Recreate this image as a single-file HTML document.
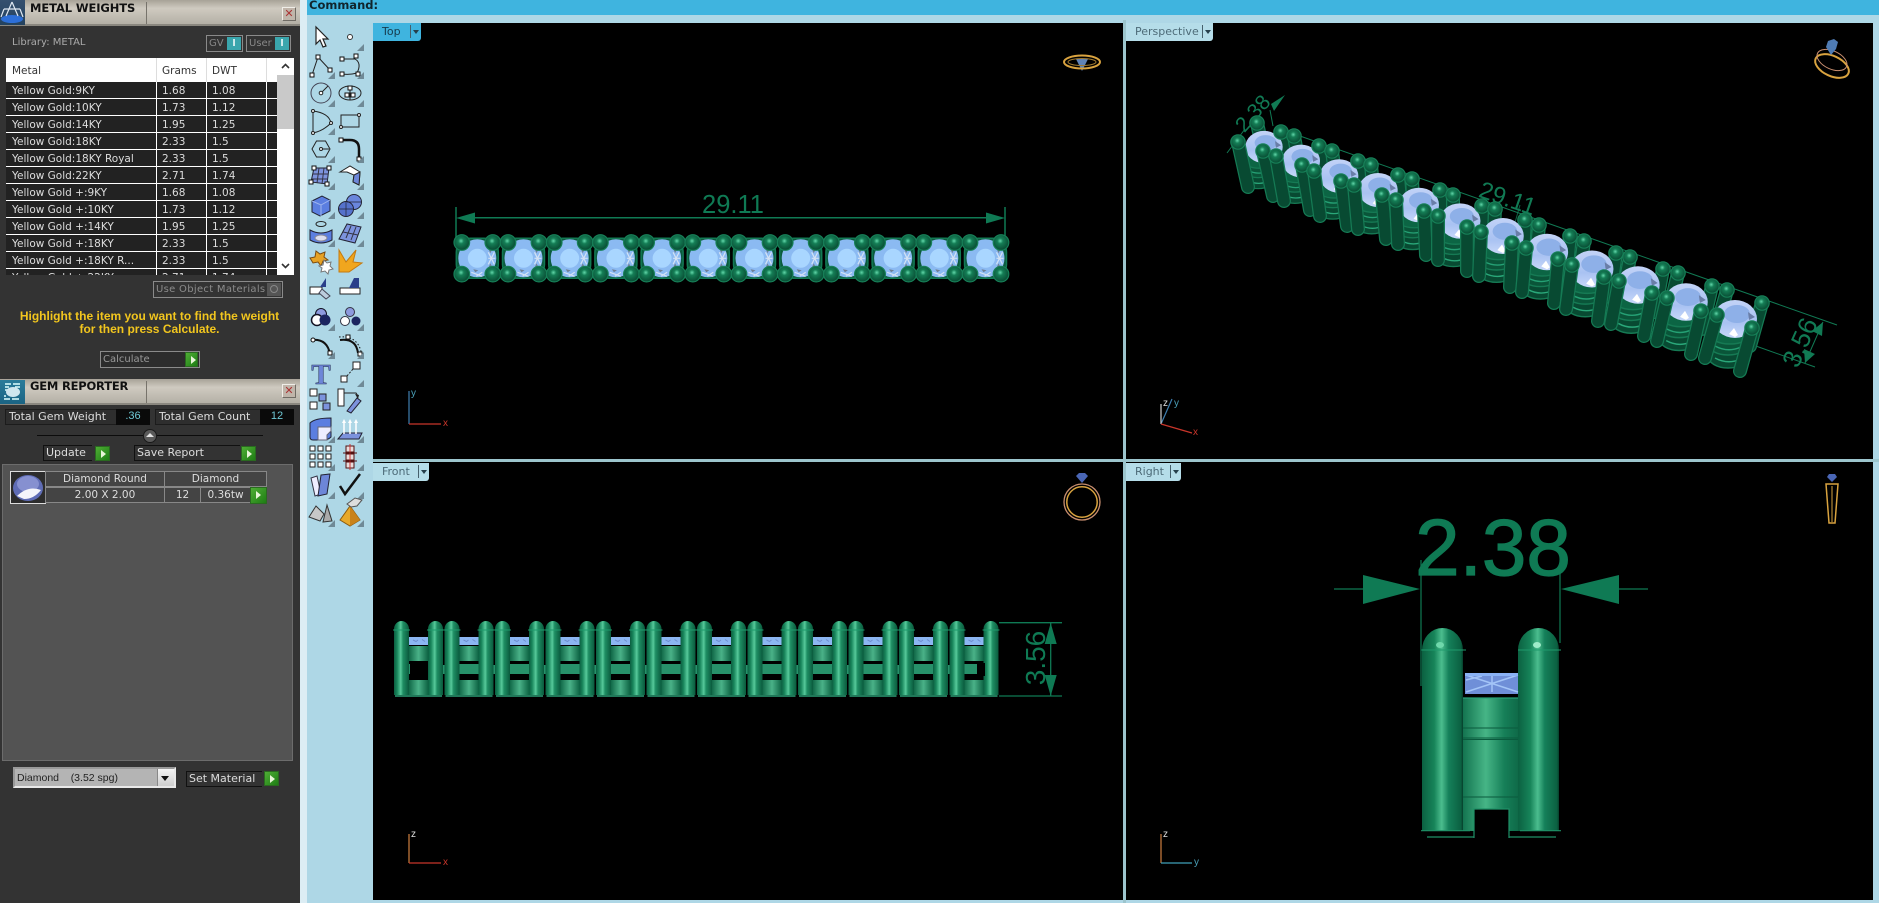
<!DOCTYPE html>
<html><head><meta charset="utf-8"><title>Metal Weights</title>
<style>
html,body{margin:0;padding:0;background:#333;width:1879px;height:903px;overflow:hidden}
*{box-sizing:border-box}
body{font-family:"DejaVu Sans","Liberation Sans",sans-serif;position:relative}
.a{position:absolute}
.t{white-space:nowrap;line-height:1}
.vp{position:absolute;background:#000}
.tab{position:absolute;height:18px;background:#b5dde9;color:#4d6b78;font:11px/18px "DejaVu Sans",sans-serif;padding-left:9px;border-bottom-right-radius:3px}
.tab i{position:absolute;right:0;top:2px;width:11px;height:13px;border-left:1px solid #46606c}
.tab i:after{content:"";position:absolute;left:2px;top:5px;border:3.5px solid transparent;border-top:4px solid #26404c;border-bottom:0}
.bar{position:absolute;left:0;width:300px;height:26px;background:linear-gradient(#a7a297,#cfcac0 35%,#b4b0a6);border-bottom:2px solid #8a877f}
.sep{position:absolute;left:146px;top:2px;width:1px;height:22px;background:#77736b}
.x{position:absolute;left:282px;width:14px;height:14px;background:#c0b5aa;border:1px solid #f0eee8;border-right-color:#6f6b64;border-bottom-color:#6f6b64;color:#a33;font:11px/12px "Liberation Sans",sans-serif;text-align:center}
.hd{position:absolute;left:30px;font:bold 11.5px/1 "DejaVu Sans",sans-serif;color:#111;white-space:nowrap;letter-spacing:-.1px}
.tbl{position:absolute;left:6px;top:58px;width:288px;height:217px;overflow:hidden;background:#fff}
.h{position:absolute;left:0;top:0;width:271px;height:24px;background:#fff;color:#333;font:10.5px/24px "DejaVu Sans",sans-serif}
.h span,.r span{position:absolute;top:1px;white-space:nowrap}
.r{position:absolute;left:0;width:271px;height:16px;background:#222;color:#ddd;font:10.5px/16px "DejaVu Sans",sans-serif}
.c1{left:6px}.c2{left:156px}.c3{left:206px}
.v{position:absolute;top:24px;width:1px;height:193px;background:#fff}
.box{position:absolute;border:1px solid #8a8a8a;color:#999;font:10px/15px "DejaVu Sans",sans-serif;white-space:nowrap}
.g{position:absolute;width:15px;height:15px;background:linear-gradient(135deg,#4fae35,#1e7d14);border:1px solid #2a6a20}
.g:after{content:"";position:absolute;left:5px;top:2.5px;border:4px solid transparent;border-left:5px solid #e8f5d8;border-right:0}
.btn{position:absolute;height:16px;background:#333;border-left:1px solid #111;border-top:1px solid #111;border-bottom:1px solid #111;color:#ddd;font:11px/14px "DejaVu Sans",sans-serif;padding-left:2px;white-space:nowrap}
.cell{position:absolute;height:16px;border:1px solid #888;background:#444;color:#ddd;font:10.5px/14px "DejaVu Sans",sans-serif;text-align:center;white-space:nowrap}
svg text{font-family:"Liberation Sans",sans-serif}
.o{fill:none;stroke:#157a54;stroke-width:14;stroke-linecap:round}
.n{fill:none;stroke:#084a32;stroke-width:11.5;stroke-linecap:round}
</style></head><body>

<!-- right side backgrounds -->
<div class="a" style="left:300px;top:0;width:7px;height:903px;background:#dcedf4"></div>
<div class="a" style="left:307px;top:0;width:1572px;height:903px;background:#aed7e6"></div>
<div class="a" style="left:307px;top:0;width:1572px;height:15px;background:#3fb4df;color:#10242c;font:bold 11.5px/11px 'DejaVu Sans',sans-serif;padding-left:2px">Command:</div>
<div class="a" style="left:373px;top:459px;width:1506px;height:3px;background:#9cc5cd"></div>
<div class="a" style="left:1123px;top:20px;width:3px;height:883px;background:#9cc5cd"></div>
<div class="vp" style="left:373px;top:23px;width:750px;height:436px"></div>
<div class="vp" style="left:1126px;top:23px;width:747px;height:436px"></div>
<div class="vp" style="left:373px;top:462px;width:750px;height:438px"></div>
<div class="vp" style="left:1126px;top:462px;width:747px;height:438px"></div>

<!-- left panel -->
<div class="a" style="left:0;top:0;width:300px;height:903px;background:#333">
  <div class="bar" style="top:0"><div class="sep"></div></div>
  <div class="a" style="left:0;top:0;width:25px;height:25px;background:linear-gradient(#35506f,#23425f)">
    <svg width="25" height="25"><ellipse cx="12" cy="19" rx="11" ry="4" fill="#2d6fd8"/><path d="M12 2L6 16M12 2l6 14M4 9h16M4 9l-3 8M20 9l3 8" stroke="#dfe8f2" stroke-width="1.2" fill="none"/></svg>
  </div>
  <div class="hd" style="top:3px">METAL WEIGHTS</div>
  <div class="x" style="top:7px">✕</div>

  <div class="a t" style="left:12px;top:38px;color:#aaa;font-size:10px">Library: METAL</div>
  <div class="box" style="left:206px;top:35px;width:37px;height:17px;padding-left:2px;color:#888">GV<span class="a" style="right:1px;top:1px;width:14px;height:13px;background:#3aa6ad;color:#fff;text-align:center;font:bold 10px/13px 'Liberation Sans',sans-serif">I</span></div>
  <div class="box" style="left:246px;top:35px;width:45px;height:17px;padding-left:2px;color:#888">User<span class="a" style="right:1px;top:1px;width:14px;height:13px;background:#3aa6ad;color:#fff;text-align:center;font:bold 10px/13px 'Liberation Sans',sans-serif">I</span></div>

  <div class="tbl">
    <div class="h"><span class="c1">Metal</span><span class="c2" style="left:156px">Grams</span><span class="c3">DWT</span></div>
    <div class="r" style="top:24px"><span class="c1">Yellow Gold:9KY</span><span class="c2">1.68</span><span class="c3">1.08</span></div>
    <div class="r" style="top:41px"><span class="c1">Yellow Gold:10KY</span><span class="c2">1.73</span><span class="c3">1.12</span></div>
    <div class="r" style="top:58px"><span class="c1">Yellow Gold:14KY</span><span class="c2">1.95</span><span class="c3">1.25</span></div>
    <div class="r" style="top:75px"><span class="c1">Yellow Gold:18KY</span><span class="c2">2.33</span><span class="c3">1.5</span></div>
    <div class="r" style="top:92px"><span class="c1">Yellow Gold:18KY Royal</span><span class="c2">2.33</span><span class="c3">1.5</span></div>
    <div class="r" style="top:109px"><span class="c1">Yellow Gold:22KY</span><span class="c2">2.71</span><span class="c3">1.74</span></div>
    <div class="r" style="top:126px"><span class="c1">Yellow Gold +:9KY</span><span class="c2">1.68</span><span class="c3">1.08</span></div>
    <div class="r" style="top:143px"><span class="c1">Yellow Gold +:10KY</span><span class="c2">1.73</span><span class="c3">1.12</span></div>
    <div class="r" style="top:160px"><span class="c1">Yellow Gold +:14KY</span><span class="c2">1.95</span><span class="c3">1.25</span></div>
    <div class="r" style="top:177px"><span class="c1">Yellow Gold +:18KY</span><span class="c2">2.33</span><span class="c3">1.5</span></div>
    <div class="r" style="top:194px"><span class="c1">Yellow Gold +:18KY R...</span><span class="c2">2.33</span><span class="c3">1.5</span></div>
    <div class="r" style="top:211px"><span class="c1">Yellow Gold +:22KY</span><span class="c2">2.71</span><span class="c3">1.74</span></div>
    <div class="v" style="left:150px"></div><div class="v" style="left:200px"></div><div class="v" style="left:260px"></div>
    <div class="a" style="left:150px;top:0;width:1px;height:24px;background:#ddd"></div>
    <div class="a" style="left:200px;top:0;width:1px;height:24px;background:#ddd"></div>
    <div class="a" style="left:260px;top:0;width:1px;height:24px;background:#ddd"></div>
    <div class="a" style="left:271px;top:17px;width:17px;height:54px;background:#c9c9c9"></div>
    <svg class="a" style="left:271px;top:0" width="17" height="217"><path d="M5 10l3.5-3.5L12 10" fill="none" stroke="#333" stroke-width="1.6"/><path d="M5 206l3.5 3.5L12 206" fill="none" stroke="#333" stroke-width="1.6"/></svg>
  </div>

  <div class="box" style="left:153px;top:281px;width:130px;height:17px;padding-left:2px;color:#8c8c8c;letter-spacing:.3px">Use Object Materials<span class="a" style="right:1px;top:1px;width:14px;height:13px;background:#555"></span><span class="a" style="right:4px;top:3px;width:8px;height:8px;border:1px solid #888;border-radius:50%"></span></div>
  <div class="a" style="left:0;top:310px;width:299px;text-align:center;color:#f2c61e;font:bold 12px/13px 'Liberation Sans',sans-serif">Highlight the item you want to find the weight<br>for then press Calculate.</div>
  <div class="box" style="left:100px;top:351px;width:100px;height:17px;padding-left:2px;background:#2c2c2c">Calculate</div>
  <div class="g" style="left:185px;top:352px;width:13px"></div>

  <div class="bar" style="top:379px"><div class="sep"></div></div>
  <div class="a" style="left:0;top:380px;width:25px;height:24px;background:linear-gradient(#2a7c9a,#1b6484)">
    <svg width="25" height="24"><path d="M5 4h6M13 4h7M5 7h4M5 10h3M4 19h6M12 19h7M4 16h2M15 7h5" stroke="#dff" stroke-width="1.4"/><ellipse cx="13" cy="12" rx="7" ry="5" fill="#cfe6ee"/></svg>
  </div>
  <div class="hd" style="top:381px;letter-spacing:-.2px">GEM REPORTER</div>
  <div class="x" style="top:384px">✕</div>

  <div class="a" style="left:5px;top:409px;width:145px;height:16px;background:#2e2e2e;border:1px solid #1c1c1c;color:#ddd;font:11px/14px 'DejaVu Sans',sans-serif;padding-left:3px;white-space:nowrap">Total Gem Weight</div>
  <div class="a" style="left:116px;top:409px;width:34px;height:16px;background:#0a0a0a;color:#6fc9d6;font:11px/15px 'Liberation Sans',sans-serif;text-align:center">.36</div>
  <div class="a" style="left:155px;top:409px;width:139px;height:16px;background:#2e2e2e;border:1px solid #1c1c1c;color:#ddd;font:11px/14px 'DejaVu Sans',sans-serif;padding-left:3px;white-space:nowrap">Total Gem Count</div>
  <div class="a" style="left:260px;top:409px;width:34px;height:16px;background:#0a0a0a;color:#6fc9d6;font:11px/15px 'Liberation Sans',sans-serif;text-align:center">12</div>

  <div class="a" style="left:37px;top:435px;width:226px;height:1px;background:#0c0c0c"></div>
  <div class="a" style="left:143px;top:429px;width:14px;height:14px;border-radius:50%;background:#5a5a5a;border:1px solid #1a1a1a"></div>
  <svg class="a" style="left:143px;top:429px" width="14" height="14"><path d="M3 8l4-4 4 4z" fill="#e4e4e4"/></svg>

  <div class="btn" style="left:43px;top:445px;width:49px">Update</div>
  <div class="g" style="left:95px;top:446px"></div>
  <div class="btn" style="left:134px;top:445px;width:106px">Save Report</div>
  <div class="g" style="left:241px;top:446px"></div>

  <div class="a" style="left:2px;top:464px;width:291px;height:297px;background:#535353;border:1px solid #6c6c6c"></div>
  <div class="a" style="left:10px;top:471px;width:36px;height:33px;background:#2c2c2c;border:1px solid #ddd">
    <svg width="34" height="31"><ellipse cx="17" cy="16" rx="15" ry="13" fill="#5f6cb5"/><ellipse cx="17" cy="12" rx="11" ry="8" fill="#8690d0"/><path d="M6 24q11-11 24-6q-7 9-17 9z" fill="#f4f4fa"/></svg>
  </div>
  <div class="cell" style="left:45px;top:471px;width:120px">Diamond Round</div>
  <div class="cell" style="left:164px;top:471px;width:103px">Diamond</div>
  <div class="cell" style="left:45px;top:487px;width:120px">2.00 X 2.00</div>
  <div class="cell" style="left:164px;top:487px;width:37px">12</div>
  <div class="cell" style="left:200px;top:487px;width:51px">0.36tw</div>
  <div class="g" style="left:250px;top:487px;width:17px;height:17px"></div>

  <div class="a" style="left:13px;top:767px;width:163px;height:21px;background:#b4b4b4;border:2px solid #e8e8e8;border-top-color:#999;border-left-color:#999;color:#222;font:10.5px/18px 'Liberation Sans',sans-serif;padding-left:2px;white-space:pre">Diamond    (3.52 spg)</div>
  <div class="a" style="left:157px;top:769px;width:17px;height:17px;background:linear-gradient(#f4f4f4,#cfcfcf);border-left:1px solid #888"></div>
  <div class="a" style="left:161px;top:776px;border:4.5px solid transparent;border-top:5px solid #111;border-bottom:0"></div>
  <div class="btn" style="left:186px;top:771px;width:76px">Set Material</div>
  <div class="g" style="left:264px;top:771px"></div>
</div>

<!-- tabs -->
<div class="tab" style="left:373px;top:23px;width:48px;background:#3fb4df;color:#163c4e">Top<i></i></div>
<div class="tab" style="left:1126px;top:23px;width:87px">Perspective<i></i></div>
<div class="tab" style="left:373px;top:463px;width:56px">Front<i></i></div>
<div class="tab" style="left:1126px;top:463px;width:55px">Right<i></i></div>

<svg class="a" style="left:0;top:0" width="1879" height="903" viewBox="0 0 1879 903">
<defs>
  <radialGradient id="bg" cx=".45" cy=".4" r=".6"><stop offset="0" stop-color="#62d8aa"/><stop offset=".3" stop-color="#157e56"/><stop offset="1" stop-color="#084a32"/></radialGradient>
  <linearGradient id="pg" x1="0" y1="0" x2="0" y2="1"><stop offset="0" stop-color="#c3d3f7"/><stop offset=".6" stop-color="#a9c2f2"/><stop offset="1" stop-color="#c8d8fa"/></linearGradient>
  <linearGradient id="post" x1="0" x2="1" y1="0" y2="0"><stop offset="0" stop-color="#0c5f41"/><stop offset=".2" stop-color="#18855b"/><stop offset=".45" stop-color="#56c99a"/><stop offset=".6" stop-color="#1f8f64"/><stop offset="1" stop-color="#0a5a3d"/></linearGradient>
  <linearGradient id="blk" x1="0" x2="1" y1="0" y2="0"><stop offset="0" stop-color="#137550"/><stop offset=".5" stop-color="#52c597"/><stop offset="1" stop-color="#10704c"/></linearGradient>
  <linearGradient id="rp" x1="0" x2="1" y1="0" y2="0"><stop offset="0" stop-color="#0b6141"/><stop offset=".3" stop-color="#178459"/><stop offset=".48" stop-color="#4bbd8e"/><stop offset=".65" stop-color="#15805a"/><stop offset=".95" stop-color="#0b6041"/><stop offset="1" stop-color="#063d2a"/></linearGradient>
  <linearGradient id="rb" x1="0" x2="1" y1="0" y2="0"><stop offset="0" stop-color="#0f6e4b"/><stop offset=".4" stop-color="#46b586"/><stop offset=".7" stop-color="#167f58"/><stop offset="1" stop-color="#0c6343"/></linearGradient>

  <g id="b"><circle r="7.2" fill="url(#bg)" stroke="#178058" stroke-width="1.2"/></g>
  <g id="bt"><circle r="7.8" fill="url(#bg)" stroke="#178058" stroke-width="1.2"/></g>

  <g id="tc">
    <rect x="-21" y="-20" width="42" height="40" rx="14" fill="#0c5a3e" stroke="#127a54" stroke-width="1.500"/>
    <circle r="19" fill="#8bbaf2"/>
    <circle r="9.500" fill="#a9d6ff"/>
    <path d="M11-6L17 6M17-6L11 6M11 0h7M-6 14L5 18M5 14l-6 4" stroke="#d4e2f4" stroke-width="1.200" fill="none"/>
    <path d="M10-12l5 3-2 4zM10 12l5-3-2-4zM-4 11l5 1-3 2z" fill="#6f7f95"/>
    <use href="#bt" x="-15.500" y="-15.800"/><use href="#bt" x="15.500" y="-15.800"/>
    <use href="#bt" x="-15.500" y="15.800"/><use href="#bt" x="15.500" y="15.800"/>
  </g>

  <g id="fc">
    <rect x="15" y="25" width="19" height="15" fill="url(#blk)" opacity=".9"/>
    <rect x="15" y="59" width="19" height="15" fill="url(#blk)" opacity=".9"/>
    <rect x="15" y="16" width="20" height="8" fill="#8cb6f2"/>
    <path d="M19 19l3 1.500 2-1.500M28 18.500l3 2" stroke="#6f8ed0" fill="none"/>
    <rect x="15" y="43" width="19" height="10" fill="#27916a"/>
    <rect x="15" y="54" width="19" height="3" fill="#000"/>
    <rect x="49" y="44" width="2" height="9" fill="#27916a"/>
    <path d="M0 74V8A7.500 8 0 0 1 15 8V74z" fill="url(#post)"/>
    <path d="M34 74V8A7.500 8 0 0 1 49 8V74z" fill="url(#post)"/>
    <path d="M-1 9h17M33 9h17" stroke="#1f9a6c" stroke-width="1"/>
    <path d="M1 75h47" stroke="#2aa077" stroke-width="1.600"/>
  </g>

  <g id="pc">
    <ellipse cx="-7" cy="37" rx="20" ry="12" fill="#084a32" stroke="#167a54" stroke-width="1.500"/>
    <path d="M-20 39q13 7 26 1" stroke="#2aa87a" stroke-width="1.500" fill="none"/>
    <ellipse cx="-7" cy="25" rx="20" ry="11" fill="#0a5539" stroke="#167a54" stroke-width="1.500"/>
    <path d="M-20 27q13 7 26 1" stroke="#25a074" stroke-width="1.500" fill="none"/>
    <ellipse cx="-5" cy="14" rx="21" ry="11" fill="#0c6544" stroke="#167a54" stroke-width="1.500"/>
    <ellipse rx="22" ry="19" fill="url(#pg)"/>
    <ellipse cx="2" cy="-5" rx="13" ry="9" fill="#8eb0e8"/>
    <path d="M13-7l7 5-6 3z" fill="#6a7ea8"/>
    <path d="M-6 15l5-6 4 7-3 2z" fill="#fff"/>
  </g>

  <polygon id="tri" points="7,14 14,14 14,7" fill="#6f8996"/>
  <g id="sq"><rect x="-2" y="-2" width="4" height="4" fill="#fff" stroke="#111"/></g>
</defs>

<!-- TOP VIEW -->
<g fill="#0f7a54" stroke="none">
  <text x="733" y="213" font-size="25.500" text-anchor="middle">29.11</text>
  <path d="M456 218l19-5.500v11zM1005 218l-19-5.500v11z"/>
</g>
<path d="M456 207V238M1005 207V238M475 217.700H986" stroke="#0f7a54" stroke-width="1.500" fill="none"/>
<use href="#tc" x="477.300" y="258.300"/><use href="#tc" x="523.500" y="258.300"/><use href="#tc" x="569.700" y="258.300"/><use href="#tc" x="615.900" y="258.300"/><use href="#tc" x="662.100" y="258.300"/><use href="#tc" x="708.300" y="258.300"/><use href="#tc" x="754.500" y="258.300"/><use href="#tc" x="800.700" y="258.300"/><use href="#tc" x="846.900" y="258.300"/><use href="#tc" x="893.100" y="258.300"/><use href="#tc" x="939.300" y="258.300"/><use href="#tc" x="985.500" y="258.300"/>

<!-- FRONT VIEW -->
<use href="#fc" x="394" y="621"/><use href="#fc" x="444.500" y="621"/><use href="#fc" x="495" y="621"/><use href="#fc" x="545.500" y="621"/><use href="#fc" x="596" y="621"/><use href="#fc" x="646.500" y="621"/><use href="#fc" x="697" y="621"/><use href="#fc" x="747.500" y="621"/><use href="#fc" x="798" y="621"/><use href="#fc" x="848.500" y="621"/><use href="#fc" x="899" y="621"/><use href="#fc" x="949.500" y="621"/>
<rect x="410" y="663" width="18" height="13" fill="#000"/>
<rect x="977" y="663" width="8" height="13" fill="#000"/>
<rect x="998.500" y="664" width="4" height="10" fill="#000"/>
<path d="M999 622.700H1062M999 696H1062M1050.700 622V696" stroke="#0f7a54" stroke-width="1.300"/>
<path d="M1050.700 623l6 21h-12zM1050.700 696l6-21h-12z" fill="#0f7a54"/>
<text x="0" y="0" font-size="28" fill="#0f7a54" text-anchor="middle" transform="translate(1045 658) rotate(-90)">3.56</text>

<!-- RIGHT VIEW -->
<rect x="1461" y="698" width="62" height="133" fill="url(#rb)"/>
<path d="M1461 728h62M1461 738h62M1461 739.500h62M1461 797h62" stroke="#0a5a3d" stroke-width="1"/>
<path d="M1461 698h62" stroke="#2aa077" stroke-width="1.200"/>
<path d="M1422 831V650A20.500 22 0 0 1 1463 650V831z" fill="url(#rp)"/>
<path d="M1518 831V650A20.500 22 0 0 1 1559 650V831z" fill="url(#rp)"/>
<ellipse cx="1440" cy="645" rx="4" ry="3" fill="#6fd8ab"/><ellipse cx="1537" cy="645" rx="4" ry="3" fill="#9fecc9"/>
<path d="M1421 650H1466M1518 650H1561" stroke="#1f9a6c" stroke-width="1"/>
<rect x="1465" y="674" width="53" height="20" fill="#6f8fd8"/>
<path d="M1465 675H1518M1466 692L1518 675M1466 675L1518 692M1492 675V692M1466 680L1482 676" stroke="#a3c4f7" stroke-width="1.500" fill="none"/>
<rect x="1465" y="673" width="53" height="3" fill="#8ab2f5"/>
<path d="M1474 837V809H1509V837z" fill="#000"/>
<path d="M1474 838V809H1509V838M1427 837H1474M1509 837H1556M1421 830.700H1470M1520 830.700H1561" stroke="#1f8f66" stroke-width="1.200" fill="none"/>
<text x="1493" y="575" font-size="80" fill="#0f7a54" stroke="#0f7a54" stroke-width="1.200" text-anchor="middle">2.38</text>
<path d="M1421 560V686M1560 573V643M1334 589H1364M1619 589H1648" stroke="#0f7a54" stroke-width="1.200" fill="none"/>
<path d="M1363 575L1420 589L1363 604zM1619 575L1561 589L1619 604z" fill="#0f7a54"/>

<!-- PERSPECTIVE VIEW -->
<g stroke="#117a54" stroke-width="1" fill="none">
  <path d="M1300 136L1837 325M1753 345L1815 367M1823 322L1805 363M1227 153L1245 129M1270 110L1273 126"/>
  <path d="M1520 205L1510 240" opacity=".8"/>
</g>
<path d="M1285 95L1271 104L1274 111z" fill="#117a54"/>
<path d="M1823 322l-1 14-10-5zM1805 363l-1-14 11 5z" fill="#117a54"/>
<text font-size="21" fill="#117a54" text-anchor="middle" transform="translate(1258 118) rotate(-48)">2.38</text>
<text font-size="24" fill="#117a54" text-anchor="middle" transform="translate(1505 206) rotate(19)">29.11</text>
<text font-size="26" fill="#117a54" text-anchor="middle" transform="translate(1808 346) rotate(-66)">3.56</text>

<g>
<path class="o" d="M1257 123L1267 168M1281 132L1291 177"/><path class="n" d="M1257 123L1267 168M1281 132L1291 177"/><use href="#pc" transform="translate(1264 147) scale(.85)"/><path class="o" d="M1238 142L1248 187M1263 151L1273 196"/><path class="n" d="M1238 142L1248 187M1263 151L1273 196"/><use href="#b" x="1257" y="123"/><use href="#b" x="1281" y="132"/><use href="#b" x="1238" y="142"/><use href="#b" x="1263" y="151"/>
<path class="o" d="M1294 136L1302 181M1319 146L1327 191"/><path class="n" d="M1294 136L1302 181M1319 146L1327 191"/><use href="#pc" transform="translate(1301 161) scale(.865)"/><path class="o" d="M1276 156L1284 201M1302 165L1310 210"/><path class="n" d="M1276 156L1284 201M1302 165L1310 210"/><use href="#b" x="1294" y="136"/><use href="#b" x="1319" y="146"/><use href="#b" x="1276" y="156"/><use href="#b" x="1302" y="165"/>
<path class="o" d="M1332 151L1338 196M1358 161L1364 206"/><path class="n" d="M1332 151L1338 196M1358 161L1364 206"/><use href="#pc" transform="translate(1339 176) scale(.88)"/><path class="o" d="M1314 171L1320 216M1341 181L1347 226"/><path class="n" d="M1314 171L1320 216M1341 181L1347 226"/><use href="#b" x="1332" y="151"/><use href="#b" x="1358" y="161"/><use href="#b" x="1314" y="171"/><use href="#b" x="1341" y="181"/>
<path class="o" d="M1371 165L1375 209M1398 175L1402 219"/><path class="n" d="M1371 165L1375 209M1398 175L1402 219"/><use href="#pc" transform="translate(1378 190) scale(.895)"/><path class="o" d="M1354 185L1358 229M1382 195L1386 239"/><path class="n" d="M1354 185L1358 229M1382 195L1386 239"/><use href="#b" x="1371" y="165"/><use href="#b" x="1398" y="175"/><use href="#b" x="1354" y="185"/><use href="#b" x="1382" y="195"/>
<path class="o" d="M1412 179L1414 223M1440 190L1442 234"/><path class="n" d="M1412 179L1414 223M1440 190L1442 234"/><use href="#pc" transform="translate(1419 205) scale(.91)"/><path class="o" d="M1396 200L1398 244M1424 211L1426 255"/><path class="n" d="M1396 200L1398 244M1424 211L1426 255"/><use href="#b" x="1412" y="179"/><use href="#b" x="1440" y="190"/><use href="#b" x="1396" y="200"/><use href="#b" x="1424" y="211"/>
<path class="o" d="M1453 195L1453 239M1482 206L1482 250"/><path class="n" d="M1453 195L1453 239M1482 206L1482 250"/><use href="#pc" transform="translate(1460 221) scale(.93)"/><path class="o" d="M1438 216L1438 260M1467 227L1467 271"/><path class="n" d="M1438 216L1438 260M1467 227L1467 271"/><use href="#b" x="1453" y="195"/><use href="#b" x="1482" y="206"/><use href="#b" x="1438" y="216"/><use href="#b" x="1467" y="227"/>
<path class="o" d="M1495 209L1493 253M1525 220L1523 264"/><path class="n" d="M1495 209L1493 253M1525 220L1523 264"/><use href="#pc" transform="translate(1503 236) scale(.945)"/><path class="o" d="M1481 232L1479 276M1512 243L1510 287"/><path class="n" d="M1481 232L1479 276M1512 243L1510 287"/><use href="#b" x="1495" y="209"/><use href="#b" x="1525" y="220"/><use href="#b" x="1481" y="232"/><use href="#b" x="1512" y="243"/>
<path class="o" d="M1539 225L1535 269M1570 236L1566 280"/><path class="n" d="M1539 225L1535 269M1570 236L1566 280"/><use href="#pc" transform="translate(1547 252) scale(.96)"/><path class="o" d="M1526 248L1522 292M1558 259L1554 303"/><path class="n" d="M1526 248L1522 292M1558 259L1554 303"/><use href="#b" x="1539" y="225"/><use href="#b" x="1570" y="236"/><use href="#b" x="1526" y="248"/><use href="#b" x="1558" y="259"/>
<path class="o" d="M1584 241L1578 285M1616 253L1610 297"/><path class="n" d="M1584 241L1578 285M1616 253L1610 297"/><use href="#pc" transform="translate(1592 269) scale(.975)"/><path class="o" d="M1572 265L1566 309M1604 277L1598 321"/><path class="n" d="M1572 265L1566 309M1604 277L1598 321"/><use href="#b" x="1584" y="241"/><use href="#b" x="1616" y="253"/><use href="#b" x="1572" y="265"/><use href="#b" x="1604" y="277"/>
<path class="o" d="M1630 257L1622 300M1663 269L1655 312"/><path class="n" d="M1630 257L1622 300M1663 269L1655 312"/><use href="#pc" transform="translate(1638 285) scale(.985)"/><path class="o" d="M1619 281L1611 324M1652 293L1644 336"/><path class="n" d="M1619 281L1611 324M1652 293L1644 336"/><use href="#b" x="1630" y="257"/><use href="#b" x="1663" y="269"/><use href="#b" x="1619" y="281"/><use href="#b" x="1652" y="293"/>
<path class="o" d="M1678 273L1668 316M1712 286L1702 329"/><path class="n" d="M1678 273L1668 316M1712 286L1702 329"/><use href="#pc" transform="translate(1686 302) scale(.99)"/><path class="o" d="M1667 298L1657 341M1701 311L1691 354"/><path class="n" d="M1667 298L1657 341M1701 311L1691 354"/><use href="#b" x="1678" y="273"/><use href="#b" x="1712" y="286"/><use href="#b" x="1667" y="298"/><use href="#b" x="1701" y="311"/>
<path class="o" d="M1727 290L1715 333M1762 303L1750 346"/><path class="n" d="M1727 290L1715 333M1762 303L1750 346"/><use href="#pc" transform="translate(1735 319)"/><path class="o" d="M1717 315L1705 358M1752 328L1740 371"/><path class="n" d="M1717 315L1705 358M1752 328L1740 371"/><use href="#b" x="1727" y="290"/><use href="#b" x="1762" y="303"/><use href="#b" x="1717" y="315"/><use href="#b" x="1752" y="328"/>
</g>

<!-- mini ring icons -->
<path d="M1076 59h12l-6 12z" fill="#5f83b8"/>
<g fill="none" stroke="#d9a33f">
  <ellipse cx="1082" cy="62" rx="18" ry="6.500" stroke-width="2"/><ellipse cx="1082" cy="62" rx="14" ry="3.500" stroke="#a07a30" stroke-width="1"/>
  <circle cx="1082" cy="502" r="18" stroke="#c98f70" stroke-width="1.300"/><circle cx="1082" cy="502" r="15.200" stroke-width="1.500"/>
  <ellipse cx="1832" cy="66" rx="18" ry="10" transform="rotate(25 1832 66)" stroke-width="2"/><ellipse cx="1832" cy="60" rx="16" ry="9" transform="rotate(25 1832 60)" stroke="#c98f70" stroke-width="1"/>
  <path d="M1826 484L1829 523H1835L1838 484z" stroke-width="1.500"/><path d="M1832 486V522" stroke-width="1"/>
</g>
<path d="M1076 476l3-3h6l3 3-6 7z" fill="#4a66b5"/>
<path d="M1826 47l2-6 6-2 4 3-2 7-5 6z" fill="#4f7cb5"/>
<path d="M1827 477l2-3h6l2 3-5 5z" fill="#4a66b5"/>

<!-- axes -->
<g fill="none" stroke-width="1.200">
  <path d="M409 424V391" stroke="#3f7fb0"/><path d="M409 424H441" stroke="#c8352a"/>
  <path d="M1161 424L1172 399" stroke="#3f7fb0"/><path d="M1161 424V404" stroke="#cfcfcf"/><path d="M1161 424L1192 433" stroke="#c8352a"/>
  <path d="M409 863V834" stroke="#d08040"/><path d="M409 863H441" stroke="#c8352a"/>
  <path d="M1161 863V834" stroke="#d08040"/><path d="M1161 863H1192" stroke="#3f9fb8"/>
</g>
<g font-size="10">
  <text x="411" y="396" fill="#4aa0b8">y</text><text x="443" y="426" fill="#c8352a">x</text>
  <text x="1163" y="406" fill="#ddd">z</text><text x="1174" y="406" fill="#4aa0b8">y</text><text x="1193" y="435" fill="#c8352a">x</text>
  <text x="411" y="837" fill="#ddd">z</text><text x="443" y="865" fill="#c8352a">x</text>
  <text x="1163" y="837" fill="#ddd">z</text><text x="1194" y="865" fill="#4aa0b8">y</text>
</g>

<!-- toolbar -->
<g transform="translate(321 37)"><path d="M-5-10V7l4-4 3 7 3-1-3-7h5z" fill="#fff" stroke="#222" stroke-width="1.200"/></g>
<g transform="translate(350 37)"><circle r="2.500" fill="#fff" stroke="#333"/><use href="#tri"/></g>

<g transform="translate(321 65)"><path d="M-9 10L-3-8 9 5" fill="none" stroke="#222"/><use href="#sq" x="-9" y="10"/><use href="#sq" x="-3" y="-8"/><use href="#sq" x="9" y="5"/><use href="#tri"/></g>
<g transform="translate(350 65)"><path d="M-8-6H5Q12-2 7 8Q0 10-8 9" fill="none" stroke="#222"/><use href="#sq" x="-8" y="-6"/><use href="#sq" x="6" y="-9"/><use href="#sq" x="-8" y="9"/><use href="#sq" x="8" y="9"/><use href="#tri"/></g>

<g transform="translate(321 93)"><circle r="10" fill="none" stroke="#445"/><path d="M0 0L7-7" stroke="#222"/><circle r="1.800" fill="#fff" stroke="#222"/><use href="#tri"/></g>
<g transform="translate(350 93)"><ellipse rx="11" ry="7" fill="none" stroke="#222"/><path d="M0-7V7" stroke="#222"/><use href="#sq" x="0" y="-5"/><use href="#sq" x="-3" y="2"/><use href="#sq" x="3" y="2"/><use href="#tri"/></g>

<g transform="translate(321 121)"><path d="M-8-10Q8-8 10 2Q2 10-8 12z" fill="none" stroke="#222"/><circle cx="-8" cy="-10" r="1.500" fill="#fff" stroke="#222"/><circle cx="10" cy="2" r="1.500" fill="#fff" stroke="#222"/><circle cx="-8" cy="12" r="1.500" fill="#fff" stroke="#222"/><use href="#tri"/></g>
<g transform="translate(350 121)"><rect x="-9" y="-6" width="18" height="12" fill="none" stroke="#222"/><circle cx="9" cy="-6" r="1.500" fill="#fff" stroke="#222"/><circle cx="-9" cy="6" r="1.500" fill="#fff" stroke="#222"/></g>

<g transform="translate(321 149)"><path d="M-9 0l4.500-8h9L9 0 4.500 8h-9z" fill="none" stroke="#222"/><path d="M0 0H8" stroke="#222"/><circle r="1.500" fill="#fff" stroke="#222"/><use href="#tri"/></g>
<g transform="translate(350 149)"><path d="M-9-9H0Q9-9 9 0V9" fill="none" stroke="#111" stroke-width="2.500"/><use href="#sq" x="-9" y="-9"/><use href="#sq" x="9" y="10"/><use href="#tri"/></g>

<g transform="translate(321 176)"><path d="M-7-8H8L6 8-10 6z" fill="#7c93dd" stroke="#223"/><path d="M-2-8L-4 7M3-8L1 8M-8-2L7-2M-9 3L6 3" stroke="#334"/><use href="#sq" x="-7" y="-8"/><use href="#sq" x="8" y="-8"/><use href="#sq" x="-10" y="6"/><use href="#sq" x="6" y="8"/><use href="#tri"/></g>
<g transform="translate(350 176)"><path d="M-10-4L0-10 10-4 9 9 3 6 4-1-3-4z" fill="#fff" stroke="#222"/><path d="M4-1L10-4 9 9 3 6z" fill="#6d86d8" stroke="#222"/><use href="#tri"/></g>

<g transform="translate(321 205)"><path d="M-9-4L1-9 9-5V6L-1 11-9 7z" fill="#5b7ee0" stroke="#223"/><path d="M-9-4L0 0 9-5M0 0V11" stroke="#9fb5ee" fill="none"/><use href="#tri"/></g>
<g transform="translate(350 205)"><circle cx="4" cy="-3" r="7.500" fill="#6a86dc" stroke="#223"/><circle cx="-4" cy="4" r="7.500" fill="#5572cc" stroke="#223"/><path d="M-11 4h14M-4-3v14M-3-3h14" stroke="#223" stroke-width=".7"/><use href="#tri"/></g>

<g transform="translate(321 233)"><ellipse cy="-9" rx="5" ry="2.500" fill="none" stroke="#222"/><path d="M-11-3V7Q0 13 11 7V-3Q0 3-11-3z" fill="#5b7ee0" stroke="#223"/><ellipse cy="5" rx="6" ry="3" fill="#dde" stroke="#889"/><use href="#tri"/></g>
<g transform="translate(350 233)"><path d="M-11 6L-3-9 11-6 5 10z" fill="#7c93dd" stroke="#223"/><path d="M-7-1L8 2M-4 5L1-7M1 7L6-6" stroke="#334"/><use href="#tri"/></g>

<g transform="translate(321 261)"><path d="M-11-3l5-1 1-6 4 3 5-2-1 5 4 3-5 1-2 5-3-4-5 1z" fill="#e6a225" stroke="#7a4a10"/><path d="M-2 5l4-1 1-5 3 3 4-1-1 4 3 3-4 1-1 4-3-3-4 1 1-4z" fill="#fff" stroke="#777"/></g>
<g transform="translate(350 261)"><path d="M-11-11L-4 1 6-11 3 1 12 2-1 11H-11z" fill="#f0a61e" stroke="#c47a10"/></g>

<g transform="translate(321 288)"><rect x="-11" y="-1" width="12" height="7" fill="#fff" stroke="#222"/><path d="M-1-1L5-10V-1z" fill="#2a3f8a"/><path d="M1 1L9 8 5 11-2 5z" fill="#bcd" stroke="#445"/></g>
<g transform="translate(350 288)"><rect x="-10" y="0" width="20" height="6" fill="#fff" stroke="#222"/><path d="M-1 0L4-10H9V0z" fill="#2a3f8a"/></g>

<g transform="translate(321 317)"><circle cx="0" cy="-3" r="5.500" fill="#8d9ade" stroke="#112"/><circle cx="-4" cy="3" r="5.500" fill="#fff" stroke="#112" stroke-width="1.500"/><circle cx="4" cy="3" r="5.500" fill="#1b2560"/><use href="#tri"/></g>
<g transform="translate(350 317)"><circle cx="0" cy="-5" r="4.500" fill="#8d9ade" stroke="#334"/><circle cx="-5" cy="4" r="4.500" fill="#fff" stroke="#334"/><circle cx="6" cy="4" r="4.500" fill="#1b2560"/><use href="#tri"/></g>

<g transform="translate(321 345)"><path d="M-10-5Q6-7 9 9" fill="none" stroke="#111" stroke-width="2"/><circle cx="-8" cy="-5" r="2" fill="#fff" stroke="#111"/><use href="#sq" x="9" y="8"/><use href="#tri"/></g>
<g transform="translate(350 345)"><path d="M-10-5Q6-7 8 8" fill="none" stroke="#111" stroke-width="2"/><path d="M-11-8Q9-10 12 11" fill="none" stroke="#111" stroke-dasharray="1.500 2"/><use href="#sq" x="-2" y="-8"/><use href="#sq" x="10" y="9"/><use href="#tri"/></g>

<g transform="translate(321 373)"><text x="0" y="11" font-size="29" font-weight="bold" fill="#6d86d8" stroke="#2a3560" stroke-width=".6" text-anchor="middle" style="font-family:'Liberation Serif',serif">T</text></g>
<g transform="translate(350 373)"><rect x="-9" y="3" width="6" height="6" fill="#fff" stroke="#222"/><rect x="3" y="-11" width="7" height="7" fill="#fff" stroke="#222"/><path d="M-3 3L3-4" stroke="#222" stroke-dasharray="2 1.500"/><use href="#tri"/></g>

<g transform="translate(321 400)"><rect x="-11" y="-11" width="7" height="7" fill="#fff" stroke="#222"/><rect x="-2" y="-6" width="7" height="7" fill="#7c93dd" stroke="#222"/><rect x="-11" y="2" width="7" height="7" fill="#fff" stroke="#222"/><rect x="2" y="3" width="7" height="7" fill="#7c93dd" stroke="#222"/></g>
<g transform="translate(350 400)"><rect x="-12" y="-11" width="6" height="17" fill="#fff" stroke="#222"/><path d="M-3 11L7-2 11 1 1 13z" fill="#7c93dd" stroke="#223"/><path d="M-6-7H6l2 3" fill="none" stroke="#222"/><path d="M5-6l4 1-1 4z" fill="#222"/></g>

<g transform="translate(321 429)"><path d="M-11-6Q-6-11 10-11V8Q7 11 2 11H-8Q-11 11-11 8z" fill="#5b7ee0" stroke="#223"/><path d="M-3-2H10V2L6 6V11H-3z" fill="#eef" stroke="#667"/><use href="#tri"/></g>
<g transform="translate(350 429)"><path d="M-12 10L-7 4H12L9 10z" fill="#7c93dd" stroke="#223"/><path d="M-6 5V-8M0 5V-8M6 5V-8" stroke="#fff" stroke-width="1.500"/><path d="M-8-6l2-4 2 4zM-2-6l2-4 2 4zM4-6l2-4 2 4z" fill="#fff"/><use href="#tri"/></g>

<g transform="translate(321 457)"><g fill="#fff" stroke="#222"><rect x="-11" y="-11" width="5" height="5"/><rect x="-3" y="-11" width="5" height="5"/><rect x="5" y="-11" width="5" height="5"/><rect x="-11" y="-3" width="5" height="5"/><rect x="-3" y="-3" width="5" height="5"/><rect x="5" y="-3" width="5" height="5"/><rect x="-11" y="5" width="5" height="5"/><rect x="-3" y="5" width="5" height="5"/><rect x="5" y="5" width="5" height="5"/></g><use href="#tri"/></g>
<g transform="translate(350 457)"><rect x="-4" y="-11" width="8" height="6" fill="#e8dcdc" stroke="#511"/><rect x="-4" y="-3" width="8" height="6" fill="#e8dcdc" stroke="#511"/><rect x="-4" y="5" width="8" height="6" fill="#e8dcdc" stroke="#511"/><path d="M0-13V13" stroke="#c33"/><path d="M-7-4H7M-7 4H7" stroke="#511"/><use href="#tri"/></g>

<g transform="translate(321 485)"><path d="M-10-7L-4-9 0 9-6 11z" fill="#eef" stroke="#334"/><path d="M0-10L9-11 6 9-3 11z" fill="#6d86d8" stroke="#223"/><use href="#tri"/></g>
<g transform="translate(350 485)"><path d="M-10 1L-5 9 10-11" fill="none" stroke="#111" stroke-width="2.500"/><use href="#tri"/></g>

<g transform="translate(321 513)"><path d="M-12 4L-5-7 3 1-1 8z" fill="#c8c8c8" stroke="#333"/><path d="M2 9L6-8 11 8z" fill="#aaa" stroke="#333"/><use href="#tri"/></g>
<g transform="translate(350 513)"><path d="M-10 7L0-7 10 7 0 13z" fill="#e8a92b" stroke="#8a5a10"/><path d="M0-7L10 7 0 13z" fill="#c9821a"/><path d="M-3-9L5-15 12-13 7-7 1-6z" fill="#ddd" stroke="#555"/><use href="#tri"/></g>
</svg>
</body></html>
